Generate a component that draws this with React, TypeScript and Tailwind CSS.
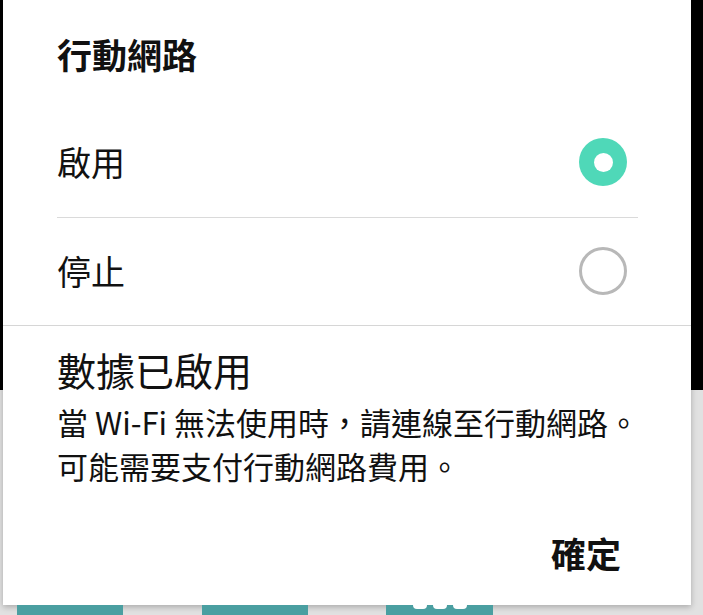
import React from "react";

const font = {
  fontFamily: '"Noto Sans CJK TC", "Noto Sans", sans-serif',
};

function Radio({ checked }: { checked: boolean }) {
  return checked ? (
    <div className="flex h-[48px] w-[48px] items-center justify-center rounded-full bg-[#4fd8b8]">
      <div className="h-[19px] w-[19px] rounded-full bg-white" />
    </div>
  ) : (
    <div className="h-[48px] w-[48px] rounded-full border-[3px] border-[#b8b8b8]" />
  );
}

export default function App() {
  return (
    <div
      className="flex h-[615px] w-[703px] flex-col overflow-hidden bg-[linear-gradient(to_bottom,#000_390px,#e1e1e1_390px)]"
      style={font}
    >
      {/* dialog */}
      <div className="ml-[3px] flex h-[605px] w-[688px] shrink-0 flex-col bg-white text-[#111] shadow-[0_2px_6px_rgba(0,0,0,0.25)]">
        <div className="h-[111px] shrink-0 pl-[54px] pt-[31px]">
          <h1 className="text-[35px] font-bold leading-[46px]">行動網路</h1>
        </div>

        <div className="shrink-0 pl-[54px] pr-[53px]">
          <div className="flex h-[107px] items-center justify-between border-b border-[#dadada] pb-[4px]">
            <span className="text-[34px] leading-[46px]">啟用</span>
            <div className="mr-[11px]">
              <Radio checked />
            </div>
          </div>
          <div className="flex h-[107px] items-center justify-between pb-[1px]">
            <span className="text-[34px] leading-[46px]">停止</span>
            <div className="mr-[11px]">
              <Radio checked={false} />
            </div>
          </div>
        </div>

        <div className="flex flex-1 flex-col border-t border-[#d6d6d6] pl-[54px] pr-[70px] pt-[19px]">
          <h2 className="text-[39px] leading-[48px]">數據已啟用</h2>
          <p className="mt-[7px] whitespace-nowrap text-[31px] leading-[44px]">
            當 Wi-Fi 無法使用時，請連線至行動網路。
            <br />
            可能需要支付行動網路費用。
          </p>
          <div className="mt-[42px] flex justify-end">
            <button className="text-[35px] font-bold leading-[46px]">確定</button>
          </div>
        </div>
      </div>

      {/* home screen peeking below */}
      <div className="flex h-[10px] gap-0">
        <div className="ml-[17px] w-[106px] bg-[#4a9fa1]" />
        <div className="ml-[79px] w-[106px] bg-[#4a9fa1]" />
        <div className="ml-[78px] flex w-[107px] justify-center gap-[6px] bg-[#4a9fa1]">
          <div className="h-[4px] w-[14px] rounded-b-sm bg-white" />
          <div className="h-[4px] w-[14px] rounded-b-sm bg-white" />
          <div className="h-[4px] w-[14px] rounded-b-sm bg-white" />
        </div>
      </div>
    </div>
  );
}
